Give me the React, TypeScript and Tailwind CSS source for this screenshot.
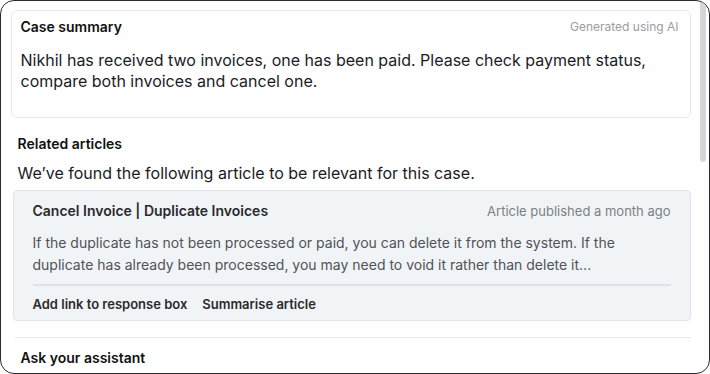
import React from 'react';

const font = { fontFamily: 'Inter, "Noto Sans", sans-serif' };

const CaseSummary: React.FC = () => (
  <div className="border border-[#e5e7eb] rounded-[6px] px-[9px] pt-[6px] pb-[25px] bg-white">
    <div className="flex items-center justify-between">
      <h2 className="text-[14px] leading-[20px] font-semibold text-[#111111]">Case summary</h2>
      <span className="text-[12px] leading-[20px] text-[#9a9ca1] mr-[2px]">Generated using AI</span>
    </div>
    <p className="mt-[13px] text-[16px] leading-[21px] text-[#1b1b1f]">
      Nikhil has received two invoices, one has been paid. Please check payment status, compare both invoices and cancel one.
    </p>
  </div>
);

const ArticleCard: React.FC = () => (
  <div className="ml-[2px] bg-[#f1f4f7] border border-[#e1e5ea] rounded-[4px] px-[19px] pt-[10px] pb-[6px]">
    <div className="flex items-center justify-between">
      <h3 className="text-[14px] leading-[20px] font-semibold text-[#2a2a2e]">Cancel Invoice | Duplicate Invoices</h3>
      <span className="text-[13px] leading-[20px] text-[#7d7f85]">Article published a month ago</span>
    </div>
    <p className="mt-[11px] text-[14px] leading-[22px] text-[#505257]">
      If the duplicate has not been processed or paid, you can delete it from the system. If the duplicate has already been processed, you may need to void it rather than delete it...
    </p>
    <div className="mt-[8px] border-t-2 border-[#dfe3e8]" />
    <div className="mt-[8px] flex items-center gap-[15px]">
      <button className="text-[13px] leading-[20px] font-semibold text-[#2a2a2e]">Add link to response box</button>
      <button className="text-[13px] leading-[20px] font-semibold text-[#2a2a2e]">Summarise article</button>
    </div>
  </div>
);

const App: React.FC = () => (
  <div className="w-[710px] h-[374px] bg-white" style={font}>
    <div className="w-full h-full border-[1.5px] border-[#2b2b31] rounded-[14px] overflow-hidden flex bg-white">
      <main className="flex-1 min-w-0 pl-[9.5px] pr-[9.5px] pt-[8.5px]">
        <CaseSummary />
        <section className="mt-[16px]">
          <h2 className="pl-[7px] text-[14px] leading-[20px] font-semibold text-[#111111]">Related articles</h2>
          <p className="pl-[7px] mt-[7px] text-[16px] leading-[24px] text-[#1b1b1f]">
            We’ve found the following article to be relevant for this case.
          </p>
          <div className="mt-[5px]">
            <ArticleCard />
          </div>
        </section>
        <div className="mt-[16px] ml-[4px] border-t border-[#e5e7eb]" />
        <h2 className="mt-[10px] pl-[10px] text-[14px] leading-[20px] font-semibold text-[#111111]">Ask your assistant</h2>
      </main>
      <div className="w-[6px] mr-[3px] flex flex-col">
        <div className="h-[161px] bg-[#d6d6d8] rounded-b-[3px]" />
      </div>
    </div>
  </div>
);

export default App;
